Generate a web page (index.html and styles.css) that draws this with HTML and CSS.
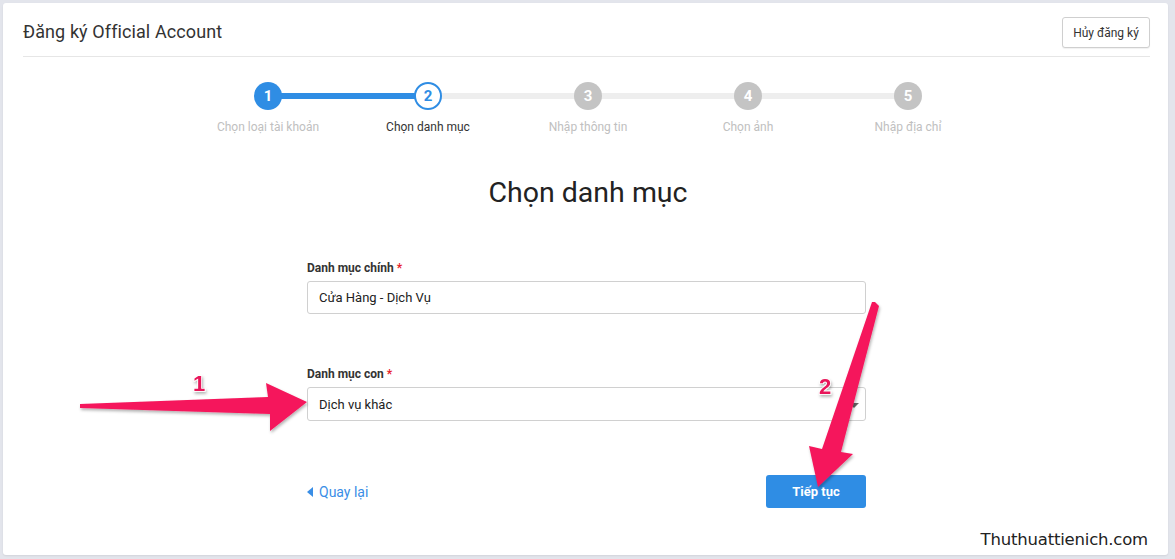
FILE: index.html
```html
<!DOCTYPE html>
<html lang="vi">
<head>
<meta charset="utf-8">
<title>Đăng ký Official Account</title>
<link rel="stylesheet" href="styles.css">
</head>
<body>
<div class="card">
  <header class="head">
    <h1 class="title">Đăng ký Official Account</h1>
    <button class="cancel">Hủy đăng ký</button>
  </header>

  <ol class="steps">
    <li class="step done"><span class="dot">1</span><span class="lbl">Chọn loại tài khoản</span></li>
    <li class="step active"><span class="dot">2</span><span class="lbl">Chọn danh mục</span></li>
    <li class="step"><span class="dot">3</span><span class="lbl">Nhập thông tin</span></li>
    <li class="step"><span class="dot">4</span><span class="lbl">Chọn ảnh</span></li>
    <li class="step"><span class="dot">5</span><span class="lbl">Nhập địa chỉ</span></li>
  </ol>

  <h2 class="heading">Chọn danh mục</h2>

  <form class="form">
    <div class="field">
      <label class="flabel">Danh mục chính <span class="req">*</span></label>
      <div class="input">Cửa Hàng - Dịch Vụ</div>
    </div>
    <div class="field second">
      <label class="flabel">Danh mục con <span class="req">*</span></label>
      <div class="input select">Dịch vụ khác<span class="caret"></span></div>
    </div>
    <div class="actions">
      <a class="back"><span class="back-tri"></span>Quay lại</a>
      <button type="button" class="next">Tiếp tục</button>
    </div>
  </form>

  <div class="watermark">Thuthuattienich.com</div>
</div>

<svg class="overlay" width="1175" height="559" viewBox="0 0 1175 559">
  <defs>
    <filter id="sh" x="-20%" y="-20%" width="140%" height="140%">
      <feDropShadow dx="1" dy="2" stdDeviation="1.5" flood-color="#000" flood-opacity="0.3"/>
    </filter>
  </defs>
  <g fill="#f5175c" filter="url(#sh)">
    <path d="M80 404 L268 397 L266 383 L307 402 L270 431 L270 414 L80 408 Z"/>
    <path d="M875 302 L879 306 L841 452 L853 454 L818 487 L809 446 L822 449 L872 302 Z"/>
  </g>
  <g class="nums" filter="url(#sh)">
    <text x="193" y="391">1</text>
    <text x="819" y="394">2</text>
  </g>
</svg>
</body>
</html>
```

FILE: styles.css
```css
* { box-sizing: border-box; }
html, body { margin: 0; padding: 0; }
body {
  background: #e3e5ec;
  width: 1175px;
  height: 559px;
  overflow: hidden;
  font-family: Roboto, "Liberation Sans", Arial, sans-serif;
  color: #333;
  padding: 3px 7px 4px 3px;
  position: relative;
}
.card {
  background: #fff;
  height: 552px;
  border-radius: 3px;
  padding: 0 18px 0 20px;
  position: relative;
  box-shadow: 0 1px 2px rgba(0,0,0,0.08);
}
.head {
  display: flex;
  justify-content: space-between;
  align-items: center;
  height: 54px;
  border-bottom: 1px solid #e6e6e6;
  padding-top: 3px;
}
.title {
  margin: 0;
  font-weight: 400;
  font-size: 18px;
  color: #333;
  letter-spacing: 0.1px;
}
.cancel {
  font-family: inherit;
  font-size: 12px;
  color: #333;
  background: #fff;
  border: 1px solid #cfcfcf;
  border-radius: 3px;
  height: 31px;
  width: 88px;
  padding: 0;
  margin-top: 3px;
  box-shadow: 0 1px 1px rgba(0,0,0,0.06);
}
.steps {
  list-style: none;
  margin: 25px 0 0;
  padding: 0;
  display: flex;
  justify-content: center;
  padding-left: 3px;
}
.step {
  width: 160px;
  display: flex;
  flex-direction: column;
  align-items: center;
  position: relative;
}
.step + .step::before {
  content: "";
  position: absolute;
  left: -50%;
  width: 100%;
  top: 11px;
  height: 6px;
  background: #eeeeee;
  z-index: 0;
}
.step.active::before { background: #2f8de4; }
.dot {
  position: relative;
  z-index: 1;
  width: 28px;
  height: 28px;
  border-radius: 50%;
  background: #c4c4c4;
  color: #fff;
  font-weight: 700;
  font-size: 15px;
  display: flex;
  align-items: center;
  justify-content: center;
}
.step.done .dot { background: #2f8de4; color: #fff; }
.step.active .dot { background: #fff; border: 2px solid #2f8de4; color: #2f8de4; }
.lbl {
  margin-top: 10px;
  font-size: 12px;
  color: #c0c0c0;
  white-space: nowrap;
}
.step.active .lbl { color: #333; }
.heading {
  margin: 42px 0 0;
  text-align: center;
  font-weight: 400;
  font-size: 28.5px;
  line-height: 34px;
  color: #222;
  padding-left: 3px;
}
.form {
  width: 559px;
  margin: 50px auto 0;
  position: relative;
  left: 0;
}
.flabel {
  display: block;
  font-size: 12px;
  font-weight: 700;
  color: #333;
  line-height: 16px;
}
.req { color: #e8202a; }
.input {
  margin-top: 5px;
  height: 33px;
  border: 1px solid #d0d0d0;
  border-radius: 3px;
  font-size: 13px;
  color: #222;
  display: flex;
  align-items: center;
  padding-left: 11px;
  position: relative;
}
.field.second { margin-top: 52px; }
.select { height: 34px; }
.caret {
  position: absolute;
  right: 6px;
  top: 15px;
  width: 0;
  height: 0;
  border-left: 5px solid transparent;
  border-right: 5px solid transparent;
  border-top: 5px solid #666;
}
.actions {
  margin-top: 54px;
  display: flex;
  justify-content: space-between;
  align-items: center;
}
.back {
  color: #3a8ee6;
  font-size: 14px;
  display: flex;
  align-items: center;
  cursor: pointer;
}
.back-tri {
  width: 0;
  height: 0;
  border-top: 5px solid transparent;
  border-bottom: 5px solid transparent;
  border-right: 6px solid #3a8ee6;
  margin-right: 6px;
}
.next {
  font-family: inherit;
  background: #2f8de4;
  color: #fff;
  border: 0;
  border-radius: 3px;
  width: 100px;
  height: 33px;
  font-size: 13px;
  font-weight: 700;
}
.watermark {
  position: absolute;
  right: 20px;
  bottom: 6px;
  font-family: "DejaVu Sans", "Liberation Sans", sans-serif;
  font-size: 16.5px;
  color: #222;
  letter-spacing: -0.2px;
}
.overlay {
  position: absolute;
  left: 0;
  top: 0;
  pointer-events: none;
}
.nums text {
  font-family: "Liberation Sans", Arial, sans-serif;
  font-weight: 700;
  font-size: 22px;
  fill: #e8175a;
  stroke: #fff;
  stroke-width: 1.5px;
  paint-order: stroke;
}
```
